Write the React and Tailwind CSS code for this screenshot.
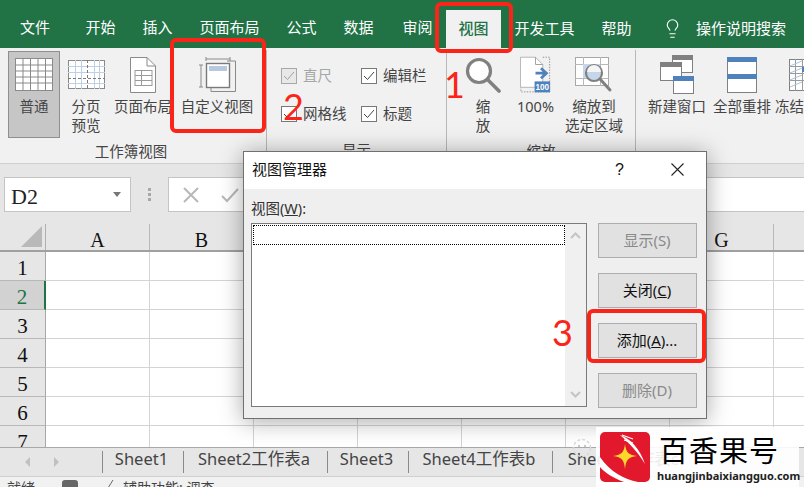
import { Lightbulb } from 'lucide-react'

const tabs = [
  { label: '文件', w: 'w-[72px] pr-[2px]' },
  { label: '开始', w: 'w-[57px]' },
  { label: '插入', w: 'w-[57px]' },
  { label: '页面布局', w: 'w-[87px]' },
  { label: '公式', w: 'w-[57px]' },
  { label: '数据', w: 'w-[57px]' },
  { label: '审阅', w: 'w-[61px]' },
]

const cols = ['A', 'B', 'C', 'D', 'E', 'F', 'G', 'H']
const rows = [1, 2, 3, 4, 5, 6, 7]
const sheets = [
  { name: 'Sheet1', w: 'w-[81px]' },
  { name: 'Sheet2工作表a', w: 'w-[144px]' },
  { name: 'Sheet3', w: 'w-[81px]' },
  { name: 'Sheet4工作表b', w: 'w-[144px]' },
  { name: 'Sheet5工作表c', w: 'w-[144px]' },
]

function NormalIcon() {
  return (
    <svg width="38" height="34" viewBox="0 0 38 34">
      <rect x="0.500" y="0.500" width="37" height="32" fill="#fff" stroke="#8a8a8a" />
      <path d="M0 7h38M0 13h38M0 19h38M0 25h38M8 0v33M15.500 0v33M23 0v33M30.500 0v33" stroke="#8a8a8a" />
    </svg>
  )
}

function PageBreakIcon() {
  return (
    <svg width="37" height="30" viewBox="0 0 37 30">
      <rect x="0.500" y="0.500" width="36" height="28" fill="#fff" stroke="#8a8a8a" />
      <path d="M0 6.500h37M0 12.500h37M0 23.500h37M7.500 0v29M13.500 0v29M26.500 0v29M31.500 0v29" stroke="#bdd0e6" />
      <path d="M0 18.500h37M19.500 0v29" stroke="#7a7a7a" strokeDasharray="3 2" />
    </svg>
  )
}

function PageLayoutIcon() {
  return (
    <svg width="26" height="36" viewBox="0 0 26 36">
      <path d="M0.500 0.500H17L25.500 9V35.500H0.500Z" fill="#fff" stroke="#8a8a8a" />
      <path d="M17 0.500V9H25.500" fill="none" stroke="#8a8a8a" />
      <path d="M5 13.500h17M5 18.500h17M5 23.500h17M5 28.500h17M5 13v16M11.500 13v16M22 13v16" stroke="#9a9a9a" />
    </svg>
  )
}

function CustomViewIcon() {
  return (
    <svg width="37" height="36" viewBox="0 0 37 36">
      <path d="M7 0v4M31 0v4M7 2h24M0 8h4M0 30h4M2 8v22" stroke="#8a8a8a" fill="none" />
      <path d="M28 4h8.500v30.500H12V31" fill="none" stroke="#8a8a8a" />
      <rect x="7.500" y="6.500" width="23" height="24" fill="#fff" stroke="#7a7a7a" strokeWidth="1.400" />
      <rect x="10" y="9" width="18" height="5" fill="#b6c9df" />
    </svg>
  )
}

function MagnifyIcon() {
  return (
    <svg width="36" height="36" viewBox="0 0 36 36">
      <circle cx="14" cy="14" r="11.500" fill="#fff" stroke="#808080" strokeWidth="3.200" />
      <path d="M23 23l11 11" stroke="#808080" strokeWidth="3.600" strokeLinecap="round" />
    </svg>
  )
}

function HundredIcon() {
  return (
    <svg width="34" height="40" viewBox="0 0 34 40">
      <path d="M0.500 0.500H17L25 8.500V33.500H0.500Z" fill="#fff" stroke="#b0b0b0" />
      <path d="M17 0.500V8.500H25" fill="none" stroke="#9a9a9a" />
      <path d="M25 0.500H32.500V38.500H1V34" fill="none" stroke="#8a8a8a" strokeDasharray="1.500 1.500" />
      <path d="M17 18h11M23 12.500l6 5.500-6 5.500" fill="none" stroke="#4f81bd" strokeWidth="3" />
      <rect x="16" y="27" width="17" height="12" fill="#4f81bd" />
      <text x="24.500" y="36.500" textAnchor="middle" fontSize="9" fontWeight="700" fill="#fff" fontFamily="'Liberation Sans', sans-serif">100</text>
    </svg>
  )
}

function ZoomSelectionIcon() {
  return (
    <svg width="38" height="36" viewBox="0 0 38 36">
      <rect x="0.500" y="0.500" width="33" height="28" fill="#fff" stroke="#a8a8a8" />
      <path d="M0 7.500h34M0 21.500h34M8.500 0v29M25.500 0v29" stroke="#b8b8b8" />
      <rect x="8" y="7" width="17" height="14" fill="#c5d6ea" />
      <circle cx="19" cy="16" r="8" fill="#c5d6ea" stroke="#808080" strokeWidth="2.200" />
      <path d="M12 15a7 7 0 0 1 14 0z" fill="#f5f5f5" />
      <path d="M25 22l10 11" stroke="#808080" strokeWidth="3" strokeLinecap="round" />
    </svg>
  )
}

function NewWindowIcon() {
  return (
    <svg width="35" height="39" viewBox="0 0 35 39">
      <rect x="12.500" y="0.500" width="20" height="17" fill="#fff" stroke="#808080" />
      <rect x="12" y="0" width="21" height="5" fill="#808080" />
      <rect x="0.500" y="7.500" width="21" height="18" fill="#fff" stroke="#808080" />
      <rect x="0" y="7" width="22" height="5" fill="#808080" />
      <rect x="13.500" y="21.500" width="20" height="17" fill="#fff" stroke="#808080" />
      <rect x="13" y="21" width="21" height="5" fill="#4f81bd" />
    </svg>
  )
}

function ArrangeIcon() {
  return (
    <svg width="30" height="36" viewBox="0 0 30 36">
      <rect x="0.500" y="0.500" width="29" height="35" fill="#fff" stroke="#808080" />
      <rect x="0" y="0" width="30" height="5" fill="#4f81bd" />
      <rect x="0" y="17" width="30" height="5" fill="#4f81bd" />
    </svg>
  )
}

function FreezeIcon() {
  return (
    <svg width="30" height="32" viewBox="0 0 30 32">
      <rect x="0.500" y="0.500" width="29" height="31" fill="#fff" stroke="#808080" />
      <path d="M0 7.500h30M0 14.500h30M0 21.500h30M6.500 0v32M13.500 0v32" stroke="#9a9a9a" />
      <path d="M1 7l12-5M1 14l12-5M1 21l12-5M1 28l12-5" stroke="#a9c3df" />
      <rect x="13" y="8" width="17" height="5" fill="#4f81bd" />
    </svg>
  )
}

function RibbonButton({ w, icon, lines, active }) {
  return (
    <div className={`${w} h-[87px] shrink-0 flex flex-col items-center border ${active ? 'bg-[#c6c6c6] border-[#8f8f8f]' : 'border-transparent'}`}>
      <div className="h-[45px] w-full flex items-center justify-center shrink-0">{icon}</div>
      {lines.map(l => (
        <div key={l} className="h-[19px] leading-[19px] text-[14.500px] text-[#444] whitespace-nowrap">{l}</div>
      ))}
    </div>
  )
}

function Group({ w, label, children, labelClass }) {
  return (
    <div className={`${w} shrink-0 flex flex-col border-r border-[#b8b8b8] h-[110px] mt-[2px]`}>
      <div className="flex h-[87px] mt-[1px]">{children}</div>
      <div className={`text-center text-[14.500px] leading-[19px] mt-[4px] text-[#444] ${labelClass || ''}`}>{label}</div>
    </div>
  )
}

function Check({ text, disabled }) {
  return (
    <div className="flex items-center gap-[6px]">
      <span className={`w-[16px] h-[16px] border flex items-center justify-center ${disabled ? 'border-[#a8a8a8] bg-[#e8e8e8]' : 'border-[#777] bg-white'}`}>
        <svg width="12" height="10" viewBox="0 0 12 10">
          <path d="M1 5l3.500 3.500L11 1" fill="none" stroke={disabled ? '#a0a0a0' : '#444'} strokeWidth="1" />
        </svg>
      </span>
      <span className={`text-[14.500px] leading-[19px] ${disabled ? 'text-[#a6a6a6]' : 'text-[#444]'}`}>{text}</span>
    </div>
  )
}

function DialogButton({ children, disabled }) {
  return (
    <div className={`h-[35px] w-[99px] bg-[#e1e1e1] border border-[#adadad] flex items-center justify-center pb-[2px] pr-[1px] text-[15px] ${disabled ? 'text-[#8a8a8a]' : 'text-[#111]'}`}>
      {children}
    </div>
  )
}

function Logo() {
  return (
    <svg width="50" height="50" viewBox="0 0 50 50" className="shrink-0">
      <rect width="50" height="50" rx="5" fill="#e2182d" />
      <path d="M0 25C10 40 24 47 38 50H24C13 46 5 41 0 35Z" fill="#fff" />
      <path d="M20 3C30 6 40 17 45 32C38 20 30 12 20 3Z" fill="#fff" />
      <path d="M22 3l11 4M24 8l9 3" stroke="#fff" strokeWidth="1.200" />
      <path d="M25 12C26 20 28 23 37 24C28 25 26 28 25 37C24 28 22 25 13 24C22 23 24 20 25 12Z" fill="#fbd72b" />
    </svg>
  )
}

export default function App() {
  return (
    <div className="relative w-[804px] h-[487px] overflow-hidden bg-white flex flex-col text-[#444] font-['Noto_Sans','Noto_Sans_CJK_SC',sans-serif]">
      {/* tab strip */}
      <div className="h-[48px] shrink-0 bg-[#217346] flex items-end text-white text-[15px]">
        <div className="flex items-center h-[38px] pb-[4px] text-center">
          {tabs.map(t => (
            <div key={t.label} className={`${t.w} text-center`}>{t.label}</div>
          ))}
        </div>
        <div className="w-[55px] h-[38px] bg-[#f1f1f1] text-[#217346] font-medium flex items-center justify-center pb-[2px] ml-[-2px]">视图</div>
        <div className="w-[87px] text-center h-[38px] flex items-center justify-center pb-[2px]">开发工具</div>
        <div className="w-[57px] text-center h-[38px] flex items-center justify-center pb-[2px]">帮助</div>
        <div className="h-[38px] flex items-center ml-[17px] gap-[13px] pb-[2px]">
          <Lightbulb size={21} strokeWidth={1.300} />
          <span>操作说明搜索</span>
        </div>
      </div>

      {/* ribbon */}
      <div className="h-[116px] shrink-0 bg-[#f1f1f1] border-b border-[#d0d0d0] flex pl-[8px]">
        <Group w="w-[259px]" label="工作簿视图" labelClass="pr-[12px]">
          <RibbonButton w="w-[52px]" active icon={<NormalIcon />} lines={['普通']} />
          <RibbonButton w="w-[52px]" icon={<PageBreakIcon />} lines={['分页', '预览']} />
          <RibbonButton w="w-[62px]" icon={<PageLayoutIcon />} lines={['页面布局']} />
          <RibbonButton w="w-[86px]" icon={<CustomViewIcon />} lines={['自定义视图']} />
        </Group>
        <Group w="w-[180px]" label="显示">
          <div className="grid grid-cols-[80px_85px] gap-y-[19px] pl-[14px] pt-[15px] content-start">
            <Check text="直尺" disabled />
            <Check text="编辑栏" />
            <Check text="网格线" />
            <Check text="标题" />
          </div>
        </Group>
        <Group w="w-[189px]" label="缩放">
          <RibbonButton w="w-[72px]" icon={<MagnifyIcon />} lines={['缩', '放']} />
          <RibbonButton w="w-[33px]" icon={<HundredIcon />} lines={['100%']} />
          <RibbonButton w="w-[84px]" icon={<ZoomSelectionIcon />} lines={['缩放到', '选定区域']} />
        </Group>
        <div className="flex h-[87px] mt-[3px] pl-[8px]">
          <RibbonButton w="w-[66px]" icon={<NewWindowIcon />} lines={['新建窗口']} />
          <RibbonButton w="w-[64px]" icon={<ArrangeIcon />} lines={['全部重排']} />
          <RibbonButton w="w-[60px]" icon={<FreezeIcon />} lines={['冻结窗格']} />
        </div>
      </div>

      {/* formula bar */}
      <div className="h-[60px] shrink-0 bg-[#e6e6e6] flex items-start pt-[13px]">
        <div className="ml-[4px] w-[127px] h-[35px] bg-white border border-[#c4c4c4] flex items-center justify-between pl-[6px] pr-[9px]">
          <span className="font-['Liberation_Serif',serif] text-[22px] pt-[3px] text-[#222]">D2</span>
          <span className="w-0 h-0 border-x-[4px] border-x-transparent border-t-[5px] border-t-[#777]" />
        </div>
        <div className="w-[37px] h-[35px] flex flex-col items-center justify-center gap-[2px]">
          <span className="w-[3px] h-[3px] bg-[#a8a8a8]" />
          <span className="w-[3px] h-[3px] bg-[#a8a8a8]" />
          <span className="w-[3px] h-[3px] bg-[#a8a8a8]" />
        </div>
        <div className="flex-1 h-[35px] bg-white border-y border-l border-[#c4c4c4] flex items-center pl-[14px] gap-[22px]">
          <svg width="16" height="16" viewBox="0 0 16 16"><path d="M1 1l14 14M15 1L1 15" stroke="#b8b8b8" strokeWidth="2" /></svg>
          <svg width="18" height="16" viewBox="0 0 18 16"><path d="M1 9l5 5L17 2" fill="none" stroke="#b8b8b8" strokeWidth="2" /></svg>
        </div>
      </div>

      {/* column headers */}
      <div className="h-[28px] shrink-0 bg-[#e6e6e6] flex border-b-2 border-[#a0a0a0]">
        <div className="w-[46px] shrink-0 border-r border-[#b0b0b0] flex items-end justify-end pr-[3px] pb-[3px]">
          <span className="w-0 h-0 border-l-[21px] border-l-transparent border-b-[21px] border-b-[#b9b9b9]" />
        </div>
        {cols.map(c => (
          <div key={c} className="w-[104px] shrink-0 border-r border-[#b8b8b8] text-center font-['Liberation_Serif',serif] text-[20px] leading-[33px] text-[#111]">{c}</div>
        ))}
      </div>

      {/* cells */}
      <div className="flex-1 overflow-hidden">
        {rows.map(r => (
          <div key={r} className="flex h-[29px] shrink-0">
            <div className={`w-[46px] shrink-0 border-r border-b flex items-center justify-center pt-[5px] font-['Liberation_Serif',serif] text-[21px] ${r === 2 ? 'bg-[#d2d2d2] text-[#217346] border-r-2 border-r-[#217346] border-b-[#b8b8b8]' : 'bg-[#e6e6e6] text-[#111] border-[#a8a8a8] border-b-[#b8b8b8]'}`}>{r}</div>
            {cols.map(c => (
              <div key={c} className="w-[104px] shrink-0 border-r border-b border-[#d4d4d4]" />
            ))}
          </div>
        ))}
      </div>

      {/* sheet tabs */}
      <div className="h-[29px] shrink-0 bg-[#e6e6e6] border-t border-[#a8a8a8] flex items-center overflow-hidden">
        <div className="w-[102px] shrink-0 flex items-center pl-[25px] gap-[24px]">
          <span className="w-0 h-0 border-y-[5px] border-y-transparent border-r-[5px] border-r-[#c0c0c0]" />
          <span className="w-0 h-0 border-y-[5px] border-y-transparent border-l-[5px] border-l-[#c0c0c0]" />
        </div>
        {sheets.map(s => (
          <div key={s.name} className={`${s.w} shrink-0 h-[22px] border-l border-[#8a8a8a] text-center pr-[3px] text-[16.500px] leading-[15px] text-[#444] whitespace-nowrap`}>{s.name}</div>
        ))}
      </div>

      {/* status bar */}
      <div className="h-[11px] shrink-0 bg-[#f1f1f1] border-t border-[#d0d0d0] flex items-start pl-[7px] text-[14px] leading-[20px] text-[#444] overflow-hidden">
        <span className="mt-[1px]">就绪</span>
        <span className="w-[16px] h-[12px] mt-[3px] ml-[27px] bg-[#666] rounded-t-[3px]" />
        <svg width="12" height="10" viewBox="0 0 12 10" className="ml-[27px] mt-[2px] shrink-0"><path d="M8 1L3 9M3 9h8" fill="none" stroke="#666" /></svg>
        <span className="mt-[1px] ml-[6px]">辅助功能: 调查</span>
      </div>

      {/* dialog */}
      <div className="absolute left-[243px] top-[151px] w-[464px] h-[268px] bg-[#efefef] border border-[#707070] shadow-[0_2px_22px_rgba(0,0,0,0.35)] text-[#111]">
        <div className="h-[37px] bg-white flex items-center pl-[8px] pr-[22px] pb-[2px] text-[15px]">
          <span className="flex-1">视图管理器</span>
          <span className="text-[16px] mr-[47px] font-['Liberation_Sans',sans-serif]">?</span>
          <svg width="13" height="13" viewBox="0 0 13 13"><path d="M0.500 0.500l12 12M12.500 0.500l-12 12" stroke="#222" strokeWidth="1.100" /></svg>
        </div>
        <div className="pl-[7px] pr-[8px] pt-[9px] text-[14.500px] leading-[20px]">
          <div className="text-[#333]">视图(<span className="underline">W</span>):</div>
          <div className="flex mt-[5px] gap-[11px]">
            <div className="w-[336px] h-[184px] bg-white border border-[#7a7a7a] flex shrink-0">
              <div className="flex-1 pl-[1px] pt-[1px]">
                <div className="h-[20px] border border-dotted border-black" />
              </div>
              <div className="w-[21px] bg-[#f0f0f0] flex flex-col items-center justify-between py-[8px]">
                <svg width="11" height="7" viewBox="0 0 11 7"><path d="M1 6l4.500-4.500L10 6" fill="none" stroke="#c4c4c4" strokeWidth="2" /></svg>
                <svg width="11" height="7" viewBox="0 0 11 7"><path d="M1 1l4.500 4.500L10 1" fill="none" stroke="#c4c4c4" strokeWidth="2" /></svg>
              </div>
            </div>
            <div className="flex flex-col gap-[15px]">
              <DialogButton disabled>显示(S)</DialogButton>
              <DialogButton>关闭(<span className="underline">C</span>)</DialogButton>
              <DialogButton>添加(<span className="underline">A</span>)...</DialogButton>
              <DialogButton disabled>删除(D)</DialogButton>
            </div>
          </div>
        </div>
      </div>

      {/* red annotations */}
      <div className="absolute left-[435px] top-[2px] w-[78px] h-[51px] border-[4px] border-[#fb2418] rounded-[6px]" />
      <div className="absolute left-[170px] top-[38px] w-[96px] h-[95px] border-[4px] border-[#fb2418] rounded-[6px]" />
      <div className="absolute left-[587px] top-[309px] w-[119px] h-[54px] border-[4px] border-[#fb2418] rounded-[6px]" />
      <span className="absolute left-[444px] top-[64px] text-[36px] leading-[40px] text-[#fb2418] font-['Lato',sans-serif]">1</span>
      <span className="absolute left-[283px] top-[86px] text-[36px] leading-[40px] text-[#fb2418] font-['Lato',sans-serif]">2</span>
      <span className="absolute left-[552px] top-[312px] text-[36px] leading-[40px] text-[#fb2418] font-['Lato',sans-serif]">3</span>

      {/* watermark */}
      <svg width="24" height="24" viewBox="0 0 24 24" className="absolute left-[572px] top-[438px]">
        <circle cx="10" cy="10" r="8.500" fill="none" stroke="#d8d8d8" strokeWidth="1.500" strokeDasharray="3 2" />
        <circle cx="7" cy="8" r="1.200" fill="#c8c8c8" />
        <circle cx="13" cy="8" r="1.200" fill="#c8c8c8" />
      </svg>
      <div className="absolute left-[596px] top-[427px] w-[203px] h-[60px] bg-white/90 flex items-start pl-[4px] pt-[5px]">
        <Logo />
        <div className="ml-[9px] flex flex-col items-start">
          <span className="text-[29px] leading-[34px] tracking-[1px] text-black font-['Noto_Sans_CJK_SC',sans-serif]">百香果号</span>
          <span className="text-[11px] leading-[15px] font-bold text-[#222] ml-[-2px] mt-[2px] font-['Noto_Sans',sans-serif] whitespace-nowrap">huangjinbaixiangguo.com</span>
        </div>
      </div>
    </div>
  )
}
